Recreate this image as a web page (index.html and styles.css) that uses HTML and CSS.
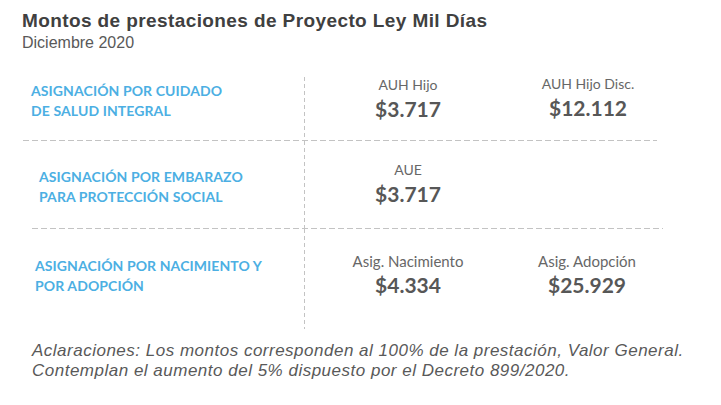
FILE: index.html
```html
<!DOCTYPE html>
<html lang="es">
<head>
<meta charset="utf-8">
<title>Montos de prestaciones</title>
<link rel="stylesheet" href="styles.css">
</head>
<body>
<div class="page">
  <header class="head">
    <h1 class="title">Montos de prestaciones de Proyecto Ley Mil Días</h1>
    <p class="subtitle">Diciembre 2020</p>
  </header>

  <section class="table">
    <div class="row row-1">
      <div class="label label-1">ASIGNACIÓN POR CUIDADO<br>DE SALUD INTEGRAL</div>
      <div class="values values-1">
        <div class="cell"><div class="name">AUH Hijo</div><div class="amount">$3.717</div></div>
        <div class="cell cell-up"><div class="name">AUH Hijo Disc.</div><div class="amount">$12.112</div></div>
      </div>
    </div>
    <div class="rule rule-1"></div>
    <div class="row row-2">
      <div class="label label-2">ASIGNACIÓN POR EMBARAZO<br>PARA PROTECCIÓN SOCIAL</div>
      <div class="values values-2">
        <div class="cell"><div class="name">AUE</div><div class="amount">$3.717</div></div>
      </div>
    </div>
    <div class="rule rule-2"></div>
    <div class="row row-3">
      <div class="label label-3">ASIGNACIÓN POR NACIMIENTO Y<br>POR ADOPCIÓN</div>
      <div class="values values-3">
        <div class="cell"><div class="name name-lg">Asig. Nacimiento</div><div class="amount">$4.334</div></div>
        <div class="cell cell-left"><div class="name name-lg">Asig. Adopción</div><div class="amount">$25.929</div></div>
      </div>
    </div>
  </section>

  <p class="note">Aclaraciones: Los montos corresponden al 100% de la prestación, Valor General.<br>Contemplan el aumento del 5% dispuesto por el Decreto 899/2020.</p>
</div>
</body>
</html>
```

FILE: styles.css
```css
html, body {
  margin: 0;
  padding: 0;
  background: #ffffff;
}

.page {
  width: 721px;
  height: 405px;
  overflow: hidden;
  padding: 9px 0 0 22px;
  box-sizing: border-box;
  font-family: "Liberation Sans", Arial, sans-serif;
}

.title {
  margin: 0;
  font-size: 19px;
  line-height: 23px;
  font-weight: bold;
  letter-spacing: 0.4px;
  color: #404040;
}

.subtitle {
  margin: 1px 0 0;
  font-size: 16px;
  line-height: 19px;
  color: #595959;
}

.table {
  margin-top: 25px;
  width: 660px;
}

.row {
  display: grid;
  grid-template-columns: 283px 1fr;
}

.row-1 { height: 63px; }
.row-2 { height: 87px; }
.row-3 { height: 100px; }

.label {
  font-family: Lato, "Open Sans", sans-serif;
  font-weight: bold;
  font-size: 14px;
  line-height: 20px;
  color: #4cafe3;
  letter-spacing: 0.1px;
  background-image: repeating-linear-gradient(180deg, #c3c3c3 0 4px, transparent 4px 7px);
  background-size: 1px 100%;
  background-position: right top;
  background-repeat: no-repeat;
}

.label-1 { padding: 4px 0 0 9px; }
.label-2 { padding: 26px 0 0 17px; }
.label-3 { padding: 27px 0 0 13px; }

.values {
  display: grid;
  grid-template-columns: 180px 180px;
  align-content: start;
  padding-left: 13px;
}

.values-1 { padding-top: 0; }
.values-2 { padding-top: 21px; }
.values-3 { padding-top: 24px; }

.cell {
  text-align: center;
  font-family: Lato, "Open Sans", sans-serif;
}

.cell-up { margin-top: -1px; }
.cell-left { margin-left: -2px; }

.name {
  font-size: 14px;
  line-height: 16px;
  color: #676767;
}

.name-lg {
  font-size: 15px;
}

.amount {
  margin-top: 4px;
  font-size: 21px;
  line-height: 24px;
  font-weight: bold;
  color: #575757;
}

.rule {
  height: 1px;
  background-image: repeating-linear-gradient(90deg, #c3c3c3 0 6px, transparent 6px 9px);
}

.rule-1 { margin-left: 1px; width: 634px; }
.rule-2 { margin-left: 10px; width: 631px; }

.note {
  margin: 12px 0 0 10px;
  font-size: 17px;
  line-height: 20px;
  font-style: italic;
  letter-spacing: 0.5px;
  color: #595959;
}
```
